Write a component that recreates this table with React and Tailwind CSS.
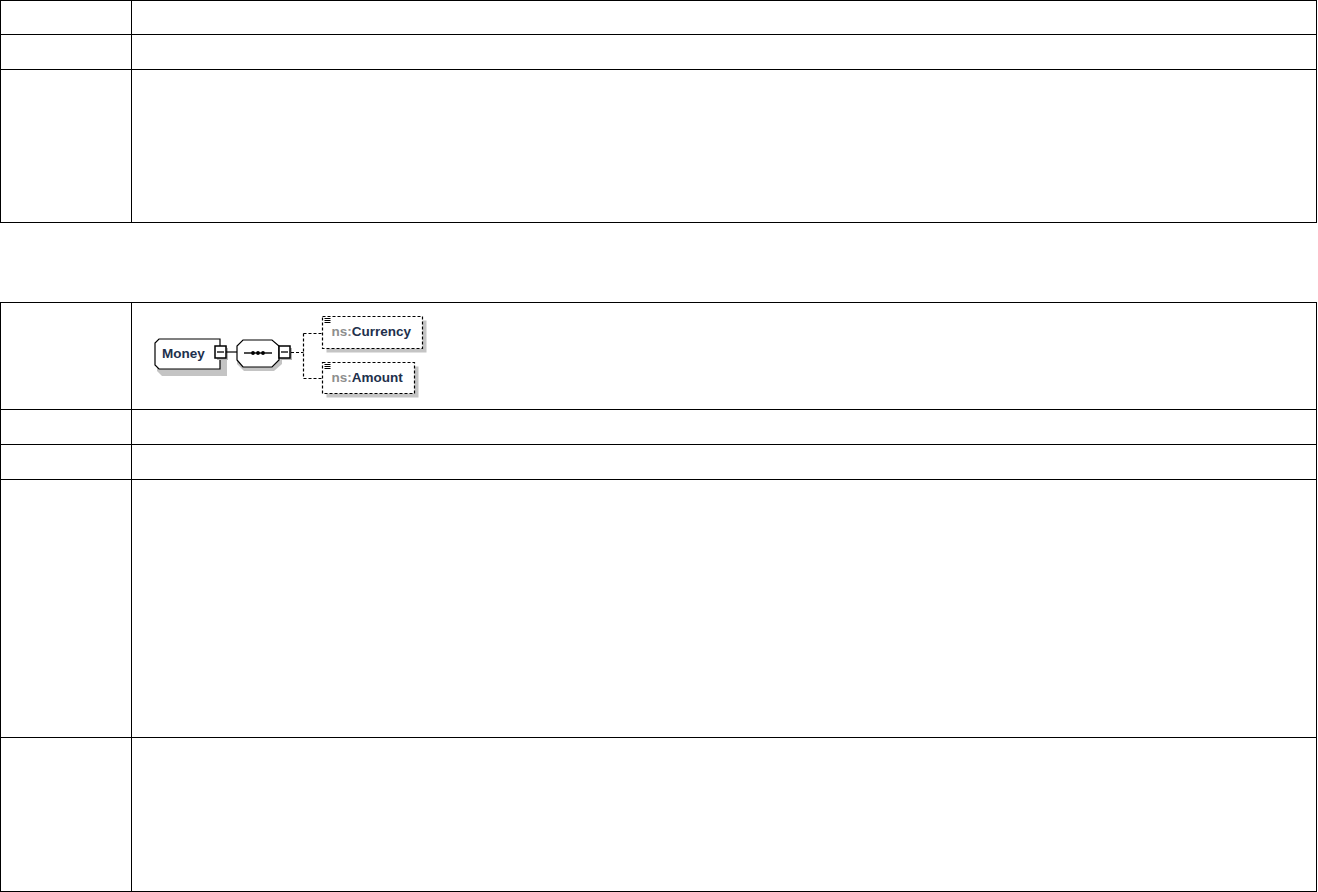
import React from "react";

// 左列 131px / 右列 1185px、行の高さはスクリーンショットから
const TOP_ROWS = [34, 35, 153];
const BOTTOM_ROWS = [107, 35, 35, 258, 154];

const FONT = "'Liberation Sans', Arial, sans-serif";

const Minus = ({ x, y }) => (
  <g>
    <rect x={x + 2} y={y + 2} width="11" height="12" fill="#b4b4b4" />
    <rect x={x} y={y} width="11" height="12" fill="#fff" stroke="#000" strokeWidth="1.5" />
    <line x1={x + 2} y1={y + 6} x2={x + 9} y2={y + 6} stroke="#000" strokeWidth="1.3" />
  </g>
);

const ElementBox = ({ x, y, w, h, name }) => (
  <g>
    <rect x={x + 4} y={y + 4} width={w} height={h} fill="#c4c4c4" />
    <rect x={x} y={y} width={w} height={h} fill="#fff" stroke="#000" strokeWidth="1.2" strokeDasharray="3 2" />
    <line x1={x + 2} y1={y + 2} x2={x + 8} y2={y + 2} stroke="#000" strokeWidth="1" />
    <line x1={x + 2} y1={y + 4} x2={x + 8} y2={y + 4} stroke="#000" strokeWidth="1" />
    <line x1={x + 2} y1={y + 6} x2={x + 8} y2={y + 6} stroke="#000" strokeWidth="1" />
    <text x={x + 9} y={y + h / 2 + 3.5} fontFamily={FONT} fontSize="13.5" fontWeight="bold">
      <tspan fill="#8e8e8e">ns:</tspan>
      <tspan fill="#22304c">{name}</tspan>
    </text>
  </g>
);

const Diagram = () => (
  <svg width="300" height="104" viewBox="0 0 300 104" className="block">
    {/* Money */}
    <path d="M 27 40 L 92 40 L 92 70 L 27 70 L 22 65 L 22 45 Z" fill="#c4c4c4" transform="translate(3 3)" />
    <path d="M 27 36 L 88 36 L 88 66 L 27 66 L 23 62 L 23 40 Z" fill="#fff" stroke="#000" strokeWidth="1.2" />
    <text x="30" y="55" fontFamily={FONT} fontSize="13.5" fontWeight="bold" fill="#22304c">
      Money
    </text>
    <Minus x={83} y={43} />
    <line x1="94" y1="49" x2="105" y2="49" stroke="#000" strokeWidth="1.2" />

    {/* sequence */}
    <path
      d="M 112 41 L 142 41 L 150 47 L 150 61 L 142 68 L 112 68 L 105 61 L 105 47 Z"
      fill="#c4c4c4"
    />
    <path
      d="M 111 37 L 140 37 L 147 43 L 147 57 L 140 64 L 111 64 L 105 57 L 105 43 Z"
      fill="#fff"
      stroke="#000"
      strokeWidth="1.2"
    />
    <line x1="112" y1="50" x2="140" y2="50" stroke="#000" strokeWidth="1.4" />
    <circle cx="121" cy="50" r="1.9" fill="#000" />
    <circle cx="126" cy="50" r="1.9" fill="#000" />
    <circle cx="131" cy="50" r="1.9" fill="#000" />
    <Minus x={147} y={43} />

    {/* connectors */}
    <g stroke="#000" strokeWidth="1.2" strokeDasharray="3 2" fill="none">
      <line x1="159" y1="49.5" x2="171.5" y2="49.5" />
      <line x1="171.5" y1="30.5" x2="171.5" y2="75.5" />
      <line x1="171.5" y1="30.5" x2="190" y2="30.5" />
      <line x1="171.5" y1="75.5" x2="190" y2="75.5" />
    </g>

    <ElementBox x={190.5} y={13.5} w={100} h={32} name="Currency" />
    <ElementBox x={190.5} y={59.5} w={92} h={31} name="Amount" />
  </svg>
);

const Table = ({ rows, children }) => (
  <div className="w-[1317px] border-t border-l border-black">
    {rows.map((h, i) => (
      <div key={i} className="flex" style={{ height: h }}>
        <div className="w-[131px] shrink-0 border-r border-b border-black" />
        <div className="w-[1185px] shrink-0 border-r border-b border-black">
          {i === 0 ? children : null}
        </div>
      </div>
    ))}
  </div>
);

export default function App() {
  return (
    <div className="bg-white w-[1318px] h-[892px] overflow-hidden">
      <Table rows={TOP_ROWS} />
      <div className="h-[79px]" />
      <Table rows={BOTTOM_ROWS}>
        <Diagram />
      </Table>
    </div>
  );
}
